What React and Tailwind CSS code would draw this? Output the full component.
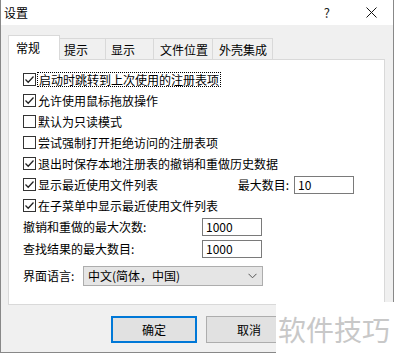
import React from 'react';

const options = [
  { label: '启动时跳转到上次使用的注册表项', checked: true, focus: true },
  { label: '允许使用鼠标拖放操作', checked: true },
  { label: '默认为只读模式', checked: false },
  { label: '尝试强制打开拒绝访问的注册表项', checked: false },
  { label: '退出时保存本地注册表的撤销和重做历史数据', checked: true },
];

const tabs = [
  { label: '常规', w: 'w-[52px] pl-[7px]' },
  { label: '提示', w: 'w-[46px] pl-[4px]' },
  { label: '显示', w: 'w-[48px] pl-[5px]' },
  { label: '文件位置', w: 'w-[59px] pl-[6px]' },
  { label: '外壳集成', w: 'w-[60px] pl-[6px]' },
];

function Box({ checked }) {
  return (
    <span className="w-[13px] h-[13px] border border-[#333] bg-white flex items-center justify-center shrink-0">
      {checked && (
        <svg width="11" height="11" viewBox="0 0 11 11">
          <path d="M1.5 5.5 L4.2 8.2 L9.5 2.5" stroke="#222" strokeWidth="1.3" fill="none" />
        </svg>
      )}
    </span>
  );
}

function CheckRow({ label, checked, focus, children }) {
  return (
    <div className="flex items-center h-[21px]">
      <Box checked={checked} />
      <span className={focus ? 'ml-[1px] px-[1px] leading-[13px] border border-dotted border-black' : 'ml-[2px]'}>
        {label}
      </span>
      {children}
    </div>
  );
}

function NumInput({ value }) {
  return (
    <div className="w-[60px] h-[18px] border border-[#7a7a7a] bg-white flex items-center pl-[3px] text-[12px]">
      {value}
    </div>
  );
}

export default function App() {
  return (
    <div
      className="w-[395px] h-[355px] bg-white relative overflow-hidden text-[12px] text-black leading-none"
      style={{ fontFamily: '"Noto Sans CJK SC", "Noto Sans", sans-serif' }}
    >
      <div className="w-[394px] h-[353px] border-l border-r border-b border-[#888] flex flex-col">
        {/* title bar */}
        <div className="h-[25px] bg-white flex items-center shrink-0">
          <span className="pl-[3px] text-[12px]">设置</span>
          <span className="ml-auto mr-[36px] text-[13px] text-[#222]">?</span>
          <svg className="mr-[16px]" width="11" height="11" viewBox="0 0 11 11">
            <path d="M0.5 0.5 L10.5 10.5 M10.5 0.5 L0.5 10.5" stroke="#111" strokeWidth="1" />
          </svg>
        </div>

        {/* body */}
        <div className="flex-1 bg-[#f0f0f0] pl-[7px] pr-[8px] pt-[10px]">
          <div className="flex items-end h-[24px]">
            {tabs.map((t, i) =>
              i === 0 ? (
                <div key={t.label} className={`${t.w} h-[25px] bg-white border-l border-t border-r border-[#d9d9d9] flex items-center relative z-10 -mb-px`}>
                  {t.label}
                </div>
              ) : (
                <div key={t.label} className={`${t.w} h-[21px] border-t border-r border-[#d9d9d9] flex items-center pt-[2px]`}>
                  {t.label}
                </div>
              )
            )}
          </div>

          <div className="w-[377px] h-[246px] bg-white border border-[#d9d9d9] pl-[14px] pt-[9px]">
            {options.map((o) => (
              <CheckRow key={o.label} {...o} />
            ))}
            <CheckRow label="显示最近使用文件列表" checked>
              <div className="ml-auto mr-[30px] flex items-center gap-[5px]">
                <span>最大数目:</span>
                <NumInput value="10" />
              </div>
            </CheckRow>
            <CheckRow label="在子菜单中显示最近使用文件列表" checked />

            <div className="flex items-center h-[22px]">
              <span className="w-[179px]">撤销和重做的最大次数:</span>
              <NumInput value="1000" />
            </div>
            <div className="flex items-center h-[22px]">
              <span className="w-[179px]">查找结果的最大数目:</span>
              <NumInput value="1000" />
            </div>
            <div className="flex items-center h-[20px] mt-[6px]">
              <span className="w-[60px]">界面语言:</span>
              <div className="w-[180px] h-[20px] bg-[#e5e5e5] border border-[#adadad] flex items-center pl-[4px]">
                <span>中文(简体，中国)</span>
                <svg className="ml-auto mr-[5px]" width="9" height="6" viewBox="0 0 9 6">
                  <path d="M0.5 0.8 L4.5 4.8 L8.5 0.8" stroke="#555" strokeWidth="1" fill="none" />
                </svg>
              </div>
            </div>
          </div>

          {/* buttons */}
          <div className="flex gap-[9px] pl-[103px] mt-[11px]">
            <button className="w-[86px] h-[27px] bg-[#e1e1e1] border-2 border-[#0078d7]">确定</button>
            <button className="w-[86px] h-[27px] bg-[#e1e1e1] border border-[#adadad]">取消</button>
          </div>
        </div>
      </div>

      {/* watermark */}
      <div className="absolute left-[276px] top-[302px] right-0 bottom-0 bg-white flex items-center pl-[2px]">
        <span className="text-[28px] text-[#c8c8c8]">软件技巧</span>
      </div>
    </div>
  );
}
